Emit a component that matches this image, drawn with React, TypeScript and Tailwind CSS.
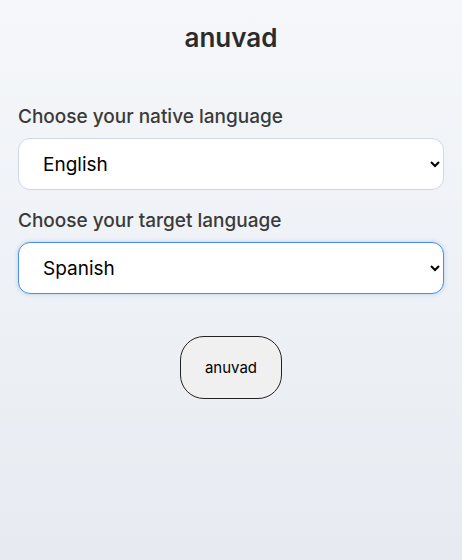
import { useState } from "react";

const LANGUAGES = ["English", "Spanish", "French", "German", "Hindi", "Japanese"];

export default function App() {
  const [native, setNative] = useState("English");
  const [target, setTarget] = useState("Spanish");

  return (
    <div className="min-h-[560px] bg-gradient-to-b from-[#f5f7fa] to-[#e7ebf1] font-['Inter',sans-serif] text-[#333]">
      <div className="px-[18px] pt-[22px]">
        <h1 className="text-center text-[26px] font-semibold leading-[32px] text-[#2b2b2b]">anuvad</h1>

        <div className="mt-[51px] flex flex-col">
          <label className="text-[19px] font-medium leading-[24px] text-[#3a3a3a]">
            Choose your native language
          </label>
          <select
            value={native}
            onChange={(e) => setNative(e.target.value)}
            className="mt-[9px] h-[52px] w-full rounded-[12px] border border-[#cfd8e6] bg-white pl-[20px] pr-[8px] text-[19px] text-black outline-none"
          >
            {LANGUAGES.map((l) => (
              <option key={l}>{l}</option>
            ))}
          </select>

          <label className="mt-[19px] text-[19px] font-medium leading-[24px] text-[#3a3a3a]">
            Choose your target language
          </label>
          <select
            value={target}
            onChange={(e) => setTarget(e.target.value)}
            className="mt-[9px] h-[52px] w-full rounded-[12px] border border-[#4a90e2] bg-white pl-[20px] pr-[8px] text-[19px] text-black shadow-[0_0_4px_rgba(74,144,226,0.35)] outline-none"
          >
            {LANGUAGES.map((l) => (
              <option key={l}>{l}</option>
            ))}
          </select>
        </div>

        <div className="mt-[42px] flex justify-center">
          <button className="h-[63px] w-[102px] rounded-[24px] border border-[#222] bg-[#f0f0f0] pt-[1px] text-[15px] text-black">
            anuvad
          </button>
        </div>
      </div>
    </div>
  );
}
